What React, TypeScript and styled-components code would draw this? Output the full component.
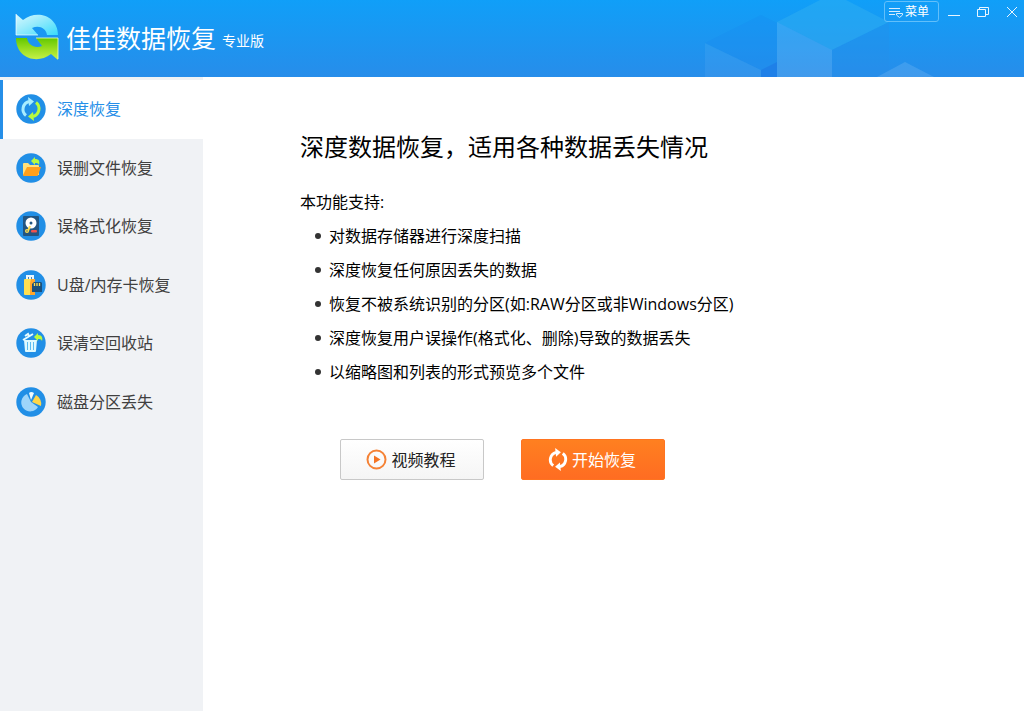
import React from "react";
import styled, { createGlobalStyle } from "styled-components";

const GlobalStyle = createGlobalStyle`
  * { box-sizing: border-box; }
  body {
    margin: 0;
    background: #fff;
    color: #000;
    font: 16px/24px "Open Sans", "Noto Sans CJK SC", sans-serif;
  }
  button { font: inherit; cursor: pointer; }
`;

const Page = styled.div`
  display: flex;
  flex-direction: column;
  min-height: 100vh;
`;

const Header = styled.header`
  position: relative;
  display: flex;
  justify-content: space-between;
  align-items: flex-start;
  height: 77px;
  overflow: hidden;
  color: #fff;
  background: linear-gradient(#109ff8, #278dea);
`;

const Cubes = styled.svg`
  position: absolute;
  right: 0;
  top: 0;
`;

const Brand = styled.div`
  display: flex;
  align-items: center;
  height: 73px;
  padding-left: 15px;
`;

const BrandName = styled.span`
  margin-left: 7px;
  font-family: "Noto Sans CJK SC", sans-serif;
  font-size: 25px;
  line-height: 40px;
`;

const Edition = styled.span`
  margin: 8px 0 0 6px;
  font-size: 14px;
  line-height: 20px;
`;

const WindowBar = styled.div`
  position: relative;
  display: flex;
  align-items: center;
  gap: 8px;
  padding: 1px 5px 0 0;
`;

const MenuButton = styled.button`
  display: flex;
  align-items: center;
  gap: 1px;
  width: 55px;
  height: 21px;
  padding: 0 4px;
  color: #fff;
  background: transparent;
  border: 1px solid #62bffa;
  border-radius: 3px;
  font-size: 12px;
  line-height: 18px;
  white-space: nowrap;
`;

const WindowButtons = styled.div`
  display: flex;
  gap: 15px;
`;

const WindowButton = styled.button`
  display: flex;
  width: 14px;
  height: 20px;
  padding: 0;
  align-items: center;
  justify-content: center;
  color: #e8f5ff;
  background: transparent;
  border: 0;
`;

const Body = styled.div`
  display: flex;
  flex: 1;
`;

const Sidebar = styled.nav`
  flex: none;
  width: 203px;
  padding-top: 3px;
  background: #f0f2f5;
`;

const NavList = styled.ul`
  display: grid;
  grid-auto-rows: 1fr;
  height: 351px;
  margin: 0;
  padding: 0;
  list-style: none;
`;

const NavLink = styled.a<{ $active?: boolean }>`
  display: flex;
  align-items: center;
  gap: 11px;
  height: 100%;
  padding-left: 13px;
  border-left: 3px solid ${(p) => (p.$active ? "#268fe8" : "transparent")};
  background: ${(p) => (p.$active ? "#fff" : "transparent")};
  color: ${(p) => (p.$active ? "#268fe8" : "#404040")};
  text-decoration: none;
`;

const Content = styled.main`
  flex: 1;
  padding: 52px 24px 24px 97px;
`;

const Title = styled.h1`
  margin: 0;
  font-size: 24px;
  line-height: 36px;
  font-weight: 400;
`;

const Lead = styled.p`
  margin: 25px 0 5px;
`;

const Features = styled.ul`
  margin: 0;
  padding: 0 0 0 15px;
  list-style: none;
`;

const Feature = styled.li`
  display: flex;
  align-items: center;
  gap: 8px;
  line-height: 34px;

  &::before {
    content: "";
    flex: none;
    width: 6px;
    height: 6px;
    border-radius: 50%;
    background: #333;
  }
`;

const Actions = styled.div`
  display: flex;
  flex-wrap: wrap;
  gap: 37px;
  margin: 50px 0 0 40px;
`;

const ActionButton = styled.button<{ $primary?: boolean }>`
  display: flex;
  align-items: center;
  justify-content: center;
  gap: 4px;
  width: 144px;
  height: 41px;
  padding: 0 2px 0 0;
  border: 1px solid ${(p) => (p.$primary ? "#ff7420" : "#c8c8c8")};
  border-radius: 2px;
  color: ${(p) => (p.$primary ? "#fff" : "#222")};
  background: ${(p) =>
    p.$primary ? "linear-gradient(#ff8020, #ff6c22)" : "linear-gradient(#fff, #f5f5f5)"};
`;

const Logo = () => (
  <svg width="44" height="46" viewBox="0 0 44 46" aria-hidden="true">
    <defs>
      <linearGradient id="ice" x1="0" x2="1" y1="0" y2="1">
        <stop offset="0" stopColor="#d8f8ff" />
        <stop offset="0.4" stopColor="#9eecfc" />
        <stop offset="1" stopColor="#38dcfc" />
      </linearGradient>
      <linearGradient id="lime" x1="0" x2="0" y1="0" y2="1">
        <stop offset="0" stopColor="#62c800" />
        <stop offset="0.5" stopColor="#9ade22" />
        <stop offset="1" stopColor="#c8f24a" />
      </linearGradient>
    </defs>
    <path d="M1 0L8 6C22-5 43 2 43 21H32C31 14 24 11 17 14L23 21H1Z" fill="url(#ice)" />
    <path d="M43 46L36 40C22 51 1 44 1 24H12C13 31 20 35 27 32L21 24H43Z" fill="url(#lime)" />
    <path d="M1 0V21H23" fill="none" stroke="#fff" opacity=".65" />
    <path d="M21 24H43V45" fill="none" stroke="#f0ffca" opacity=".8" />
  </svg>
);

const Cycle = ({ first, second }: { first: string; second: string }) => (
  <>
    <path d="M10 21.5A8 8 0 0 1 13 7.5" fill="none" stroke={first} strokeWidth="3" />
    <path d="M12 3L18 7.5L13 12Z" fill={first} />
    <path d="M20 8.5A8 8 0 0 1 17 22.5" fill="none" stroke={second} strokeWidth="3" />
    <path d="M18 27L12 22.5L17 18Z" fill={second} />
  </>
);

const drawings: Record<string, React.ReactNode> = {
  deep: <Cycle first="#a8edff" second="#b8fb3e" />,
  folder: (
    <>
      <path d="M7 11Q7 10 8 10H12L14 12H22Q23 12 23 13V22H7Z" fill="#ffe17c" />
      <path d="M11 14H25L22 22Q22 23 21 23H8Q7 23 7 22Z" fill="#ffa01c" />
      <path d="M15 8L19 4V6C23 6 24 8 23 12C22 10 21 10 19 10V12Z" fill="#b8fb3e" />
    </>
  ),
  disk: (
    <>
      <rect x="7" y="5" width="16" height="20" rx="1" fill="#235581" />
      <circle cx="15" cy="12" r="5.5" fill="#fff" />
      <circle cx="15" cy="12" r="1.5" fill="#235581" />
      <path d="M14 15L12 20" stroke="#ffe052" strokeWidth="2" />
      <circle cx="11" cy="20" r="2" fill="#ffe052" />
      <circle cx="11" cy="20" r=".7" fill="#235581" />
      <rect x="15" y="19" width="6" height="2.5" rx="1" fill="#f1524c" />
    </>
  ),
  usb: (
    <>
      <rect x="10" y="5" width="8" height="6" fill="#e9f7ff" />
      <path d="M12 7H13V9H12ZM15 7H16V9H15Z" fill="#4b89b9" />
      <path d="M8 10Q8 9 9 9H18Q19 9 19 10V25H9Q8 25 8 24Z" fill="#ffe052" />
      <path d="M15 9H18Q19 9 19 10V25H14V13Z" fill="#ffa52a" />
      <path d="M18 12H25L26 13V22H16V14Z" fill="#194f7c" />
      <path d="M18.5 13V16M21 13V16M23.5 13V16" stroke="#ffe052" strokeWidth="1.3" />
    </>
  ),
  trash: (
    <>
      <path d="M8 12H21L20 23Q20 24 19 24H10Q9 24 9 23Z" fill="#dffaff" />
      <path d="M11.5 14V22M14.5 14V22M17.5 14V22" stroke="#5bbcf1" />
      <path d="M7 12L17 6M9 8L12 6L13 8" fill="none" stroke="#e8fcff" strokeWidth="2" />
      <path d="M18 9L22 5V7C26 7 27 10 26 13C25 11 24 11 22 11V13Z" fill="#b8fb3e" />
    </>
  ),
  pie: (
    <>
      <path d="M11 7L15 15L22 20A9 9 0 1 1 11 7Z" fill="#9ed5fa" />
      <path d="M13 6Q15 4 18 6L15 13Z" fill="#f0fbff" />
      <path d="M20 8A10 10 0 0 1 25 19L16 15Z" fill="#ffd649" />
    </>
  ),
};

const NavIcon = ({ name }: { name: string }) => (
  <svg width="30" height="30" viewBox="0 0 30 30" aria-hidden="true">
    <circle cx="15" cy="15" r="14.7" fill="#218fe6" />
    {drawings[name]}
  </svg>
);

const items = [
  ["deep", "深度恢复"],
  ["folder", "误删文件恢复"],
  ["disk", "误格式化恢复"],
  ["usb", "U盘/内存卡恢复"],
  ["trash", "误清空回收站"],
  ["pie", "磁盘分区丢失"],
];

const features = [
  "对数据存储器进行深度扫描",
  "深度恢复任何原因丢失的数据",
  "恢复不被系统识别的分区(如:RAW分区或非Windows分区)",
  "深度恢复用户误操作(格式化、删除)导致的数据丢失",
  "以缩略图和列表的形式预览多个文件",
];

export default function App() {
  return (
    <Page>
      <GlobalStyle />
      <Header>
        <Cubes width="324" height="77" viewBox="700 0 324 77" aria-hidden="true">
          <path d="M705 43L761 15L777 23V62L761 70Z" fill="#1688ee" opacity=".25" />
          <path d="M705 43L761 70V77H705Z" fill="#fff" opacity=".06" />
          <path d="M761 70L777 62V77H761Z" fill="#1a76e6" opacity=".6" />
          <path d="M777 22L820 0H846L889 22L832 50Z" fill="#36b4f0" opacity=".4" />
          <path d="M777 22L832 50V77H777Z" fill="#fff" opacity=".12" />
          <path d="M832 50L889 22V77H832Z" fill="#278de8" opacity=".3" />
          <path d="M877 77L905 62L934 77Z" fill="#fff" opacity=".12" />
        </Cubes>
        <Brand>
          <Logo />
          <BrandName>佳佳数据恢复</BrandName>
          <Edition>专业版</Edition>
        </Brand>
        <WindowBar>
          <MenuButton type="button">
            <svg width="15" height="14" viewBox="0 0 15 14" fill="none" stroke="#d5edff" aria-hidden="true">
              <path d="M0 3.5H11M0 6.5H11M0 9.5H6" />
              <path d="M7.5 8.5H13.5V10L10.5 12.5L7.5 10Z" />
            </svg>
            菜单
          </MenuButton>
          <WindowButtons>
            <WindowButton type="button" aria-label="最小化">
              <svg width="12" height="12" viewBox="0 0 12 12" stroke="currentColor">
                <path d="M0 9.5H12" />
              </svg>
            </WindowButton>
            <WindowButton type="button" aria-label="还原">
              <svg width="12" height="12" viewBox="0 0 12 12" fill="none" stroke="currentColor">
                <path d="M.5 3.5H8.5V10.5H.5ZM2.5 3V1.5H11.5V8.5H9" />
              </svg>
            </WindowButton>
            <WindowButton type="button" aria-label="关闭">
              <svg width="12" height="12" viewBox="0 0 12 12" stroke="currentColor">
                <path d="M1 1L11 11M11 1L1 11" />
              </svg>
            </WindowButton>
          </WindowButtons>
        </WindowBar>
      </Header>
      <Body>
        <Sidebar>
          <NavList>
            {items.map(([name, label], i) => (
              <li key={name}>
                <NavLink href={`#${name}`} $active={i === 0}>
                  <NavIcon name={name} />
                  {label}
                </NavLink>
              </li>
            ))}
          </NavList>
        </Sidebar>
        <Content>
          <Title>深度数据恢复，适用各种数据丢失情况</Title>
          <Lead>本功能支持:</Lead>
          <Features>
            {features.map((text) => (
              <Feature key={text}>{text}</Feature>
            ))}
          </Features>
          <Actions>
            <ActionButton type="button">
              <svg width="21" height="21" viewBox="0 0 21 21" aria-hidden="true">
                <circle cx="10.5" cy="10.5" r="9" fill="none" stroke="#f58235" strokeWidth="2" />
                <path d="M8 6.5L14.5 10.5L8 14.5Z" fill="#f57524" />
              </svg>
              视频教程
            </ActionButton>
            <ActionButton type="button" $primary>
              <svg width="20" height="23" viewBox="5 3 20 24" aria-hidden="true">
                <Cycle first="#fff" second="#fff" />
              </svg>
              开始恢复
            </ActionButton>
          </Actions>
        </Content>
      </Body>
    </Page>
  );
}
